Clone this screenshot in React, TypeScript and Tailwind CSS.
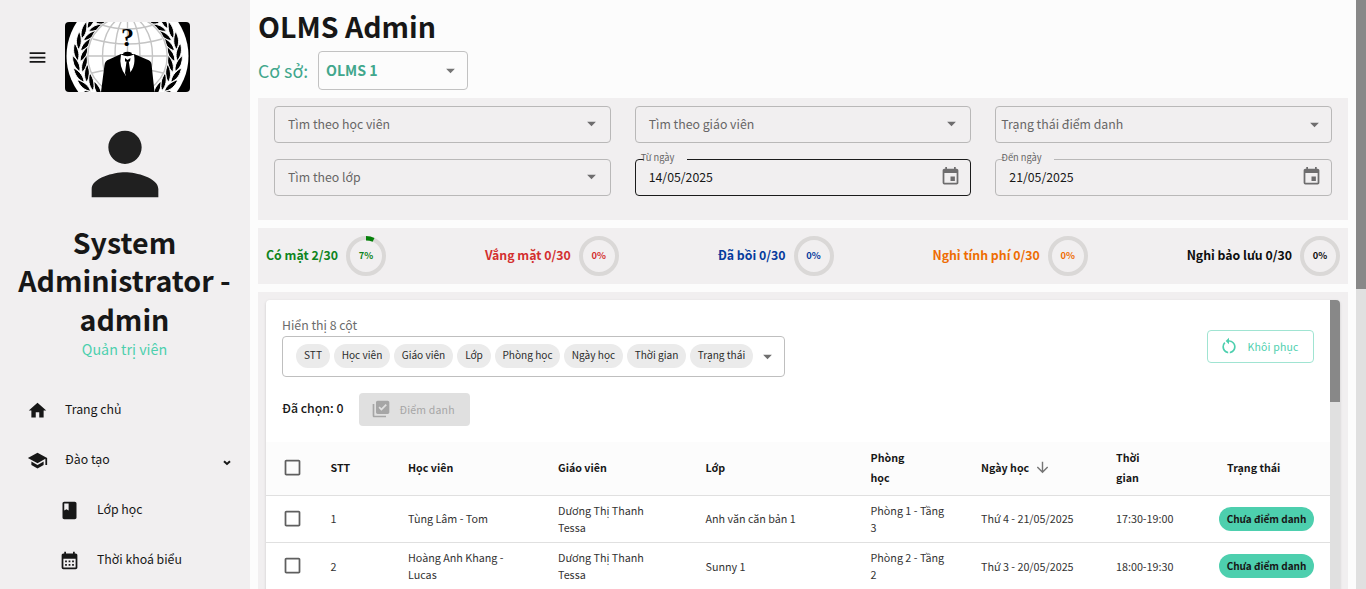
import React from "react";
import {
  MdMenu,
  MdPerson,
  MdHome,
  MdSchool,
  MdBook,
  MdCalendarMonth,
  MdEvent,
  MdArrowDropDown,
  MdArrowDownward,
  MdCheckBoxOutlineBlank,
  MdLibraryAddCheck,
  MdRestartAlt,
} from "react-icons/md";

const LEAF = "M0 1C3.6 -3.5 3.6 -10 1 -17C-2.6 -11 -3 -4.500 0 1Z";

function Wreath() {
  const steps = [50, 37, 24, 11, -2, -15, -28, -41, -54];
  return (
    <g>
      {steps.map((deg) => {
        const a = (deg * Math.PI) / 180;
        const x = 62.5 - 48.5 * Math.cos(a);
        const y = 36 - 48.5 * Math.sin(a);
        return (
          <g key={deg} transform={`translate(${x.toFixed(1)} ${y.toFixed(1)}) rotate(${deg})`}>
            <path d={LEAF} transform="translate(-1.500 0) rotate(-11)" />
            <path d={LEAF} transform="translate(1.500 1) rotate(28)" />
          </g>
        );
      })}
    </g>
  );
}

function Logo() {
  return (
    <svg viewBox="0 0 125 70" className="h-[70px] w-[125px] rounded">
      <rect width="125" height="70" fill="#000" />
      <circle cx="62.5" cy="34" r="61" fill="#fff" />
      <g fill="#000" stroke="#fff" strokeWidth="0.9">
        <Wreath />
        <g transform="translate(125 0) scale(-1 1)">
          <Wreath />
        </g>
      </g>
      <circle cx="62.5" cy="34" r="41" fill="#fff" />
      <g fill="none" stroke="#c4c4c4" strokeWidth="1.4">
        <circle cx="62.5" cy="34" r="39.7" />
        <ellipse cx="62.5" cy="34" rx="25" ry="39.7" />
        <ellipse cx="62.5" cy="34" rx="12.5" ry="39.7" />
        <path d="M22.8 34H102.2M62.5 -5V34M28 17Q62.5 27 97 17M37 3Q62.5 11 88 3M27 51Q62.5 42 98 51" />
      </g>
      <path d="M36 70L39.5 43Q40 38.500 44 37.500L56 32L69 32L82 37.500Q86 38.500 86.500 42L89.500 70Z" fill="#000" />
      <path d="M56 32.500Q53.500 45 61 54Q71.500 47 69 32.500Q62.500 36 56 32.500Z" fill="#fff" />
      <path d="M60 36L62.500 38L65.500 36L65 39.500L63.800 39.500L65.500 51L62 57L60 51L61.500 39.500L60 39.500Z" fill="#000" />
      <path d="M58 31Q62.500 28.500 67 31L66 32.800Q62.500 31.500 59 32.800Z" fill="#000" />
      <text
        x="62.500"
        y="23.500"
        textAnchor="middle"
        fontSize="26"
        fontWeight="bold"
        fontFamily="Liberation Serif, serif"
      >
        ?
      </text>
    </svg>
  );
}

function NavItem({ icon, label, sub, open }: { icon: React.ReactNode; label: string; sub?: boolean; open?: boolean }) {
  return (
    <li className={`flex h-[50px] items-center ${sub ? "pl-[58.500px]" : "pl-[26.500px]"} pr-[19.500px]`}>
      <span className="w-[38.500px] text-[21px]">{icon}</span>
      <span className="relative -top-px text-[12.3px] leading-5">{label}</span>
      {open && (
        <svg viewBox="0 0 8 6" className="mt-[5px] ml-auto h-[6px] w-2">
          <path d="M1 1.200L4 4L7 1.200" fill="none" stroke="#171717" strokeWidth="2" />
        </svg>
      )}
    </li>
  );
}

function SelectField({ label, tight }: { label: string; tight?: boolean }) {
  return (
    <div
      className={`flex h-[37px] items-center justify-between rounded border border-[#b9b8b8] ${tight ? "pr-[6px] pl-[5px]" : "pr-[8px] pl-[13px]"}`}
    >
      <span className="relative -top-px text-[12.3px] leading-5 text-[#676666]">{label}</span>
      <MdArrowDropDown className={`text-[21px] text-[#6e6d6e] ${tight ? "" : "-mt-[3px]"}`} />
    </div>
  );
}

function DateField({ label, value, active, notch }: { label: string; value: string; active?: boolean; notch: string }) {
  return (
    <div
      className={`relative flex h-[37px] items-center justify-between rounded border pr-[9px] pl-[13px] ${active ? "border-[#1b1b1b]" : "border-[#b9b8b8]"}`}
    >
      <span className={`absolute -top-px h-px bg-[#f1eff0] ${notch}`} />
      <span className="absolute -top-[10px] left-[5px] text-[9.3px] leading-[14px] text-[#676666]">{label}</span>
      <span className="relative -top-px text-[12.3px] leading-5">{value}</span>
      <MdEvent className="-mt-[2px] text-[21px] text-[#6e6d6e]" />
    </div>
  );
}

const stats = [
  { label: "Có mặt 2/30", pct: 7, color: "text-[#0e8420]" },
  { label: "Vắng mặt 0/30", pct: 0, color: "text-[#d32f2f]" },
  { label: "Đã bồi 0/30", pct: 0, color: "text-[#063b9d]" },
  { label: "Nghỉ tính phí 0/30", pct: 0, color: "text-[#ee6c02]" },
  { label: "Nghỉ bảo lưu 0/30", pct: 0, color: "text-[#0d0d0d]" },
];

function Ring({ pct }: { pct: number }) {
  return (
    <div className="relative flex size-10 items-center justify-center">
      <svg viewBox="0 0 40 40" className="absolute inset-0">
        <circle cx="20" cy="20" r="18" fill="none" stroke="#dad8d7" strokeWidth="4" />
        {pct > 0 && (
          <circle
            cx="20"
            cy="20"
            r="17.8"
            fill="none"
            stroke="#058009"
            strokeWidth="4.4"
            pathLength="100"
            strokeDasharray={`${pct} 100`}
            transform="rotate(-90 20 20)"
          />
        )}
      </svg>
      <span className="relative -top-px text-[9.3px] leading-4 font-bold">{pct}%</span>
    </div>
  );
}

const chips = [
  { label: "STT", w: "w-[34px]" },
  { label: "Học viên", w: "w-[56px]" },
  { label: "Giáo viên", w: "w-[59px]" },
  { label: "Lớp", w: "w-[34px]" },
  { label: "Phòng học", w: "w-[65px]" },
  { label: "Ngày học", w: "w-[59px]" },
  { label: "Thời gian", w: "w-[59px]" },
  { label: "Trạng thái", w: "w-[63px]" },
];

const rows = [
  { n: 1, student: "Tùng Lâm - Tom", cls: "Anh văn căn bản 1", room: "Phòng 1 - Tầng 3", day: "Thứ 4 - 21/05/2025", time: "17:30-19:00", nudge: "-top-px" },
  { n: 2, student: "Hoàng Anh Khang - Lucas", cls: "Sunny 1", room: "Phòng 2 - Tầng 2", day: "Thứ 3 - 20/05/2025", time: "18:00-19:30", nudge: "top-0" },
];

const GRID = "grid grid-cols-[64.500px_77.500px_150px_147.500px_165px_110.500px_135px_103px_95px] items-center";

export default function App() {
  return (
    <div className="flex h-[589px] w-full overflow-hidden bg-[#fcfcfc] font-['Noto_Sans_CJK_SC',sans-serif] text-[#171717]">
      <aside className="flex w-[250px] shrink-0 flex-col bg-[#f1eff0]">
        <div className="flex items-center pt-[22px] pl-[26.500px]">
          <MdMenu className="mr-[17.500px] text-[21px]" />
          <Logo />
        </div>
        <MdPerson className="mt-[22px] self-center text-[100px] text-[#202020]" />
        <h2 className="mt-[9px] pr-[9px] pl-2 text-center text-[28.6px] leading-[38.4px] font-bold">
          System Administrator - admin
        </h2>
        <p className="pr-px text-center text-[14.3px] leading-[22px] text-[#4dcfae]">Quản trị viên</p>
        <ul className="mt-[25px]">
          <NavItem icon={<MdHome />} label="Trang chủ" />
          <NavItem icon={<MdSchool />} label="Đào tạo" open />
          <NavItem icon={<MdBook />} label="Lớp học" sub />
          <NavItem icon={<MdCalendarMonth />} label="Thời khoá biểu" sub />
        </ul>
      </aside>

      <main className="flex min-w-0 flex-1 flex-col px-2">
        <h1 className="mt-[6px] text-[28.5px] leading-10 font-bold">OLMS Admin</h1>
        <div className="mt-[5px] flex items-center">
          <span className="relative -top-px w-[60px] text-[17.8px] leading-7 text-[#41a78c]">Cơ sở:</span>
          <div className="flex h-[39px] w-[150px] items-center justify-between rounded border border-[#c2c2c2] pr-[6.500px] pl-[7px]">
            <span className="relative -top-px text-[14.2px] leading-5 font-bold text-[#41a78c]">OLMS 1</span>
            <MdArrowDropDown className="text-[21px] text-[#757575]" />
          </div>
        </div>

        <section className="mt-2 grid h-[122px] shrink-0 grid-cols-3 content-start gap-x-6 gap-y-4 bg-[#f1eff0] px-4 pt-2">
          <SelectField label="Tìm theo học viên" />
          <SelectField label="Tìm theo giáo viên" />
          <SelectField label="Trạng thái điểm danh" tight />
          <SelectField label="Tìm theo lớp" />
          <DateField label="Từ ngày" value="14/05/2025" active notch="left-[8px] w-[43px]" />
          <DateField label="Đến ngày" value="21/05/2025" notch="left-[6px] w-[52px]" />
        </section>

        <section className="mt-2 flex h-14 shrink-0 items-center justify-between bg-[#f1eff0] px-2">
          {stats.map((s) => (
            <div key={s.label} className={`flex items-center gap-2 ${s.color}`}>
              <span className="relative -top-px text-[12.3px] leading-5 font-bold">{s.label}</span>
              <Ring pct={s.pct} />
            </div>
          ))}
        </section>

        <section className="mt-2 flex flex-1 bg-[#f1eff0] px-2 pt-2">
          <div className="flex flex-1 overflow-hidden rounded-t bg-white shadow-[0_1px_3px_rgba(0,0,0,0.16)]">
            <div className="w-[1064px]">
              <div className="flex h-[142px] justify-between px-4">
                <div className="pt-[15px]">
                  <p className="text-[12.3px] leading-[21px] text-[#6b6b6b]">Hiển thị 8 cột</p>
                  <div className="flex h-[41px] w-[503px] items-start gap-1 rounded border border-[#bfbfbf] pt-[7px] pl-[13px]">
                    {chips.map((c) => (
                      <span
                        key={c.label}
                        className={`flex h-6 items-center justify-center rounded-full bg-[#ebebeb] pb-[2px] text-[10.1px] whitespace-nowrap text-[#2b2b2b] ${c.w}`}
                      >
                        {c.label}
                      </span>
                    ))}
                    <MdArrowDropDown className="mt-[2px] text-[21px] text-[#6f6f6f]" />
                  </div>
                  <div className="mt-4 flex h-[33px] items-center">
                    <span className="relative -top-[2px] w-[77px] text-[12.3px] leading-5 font-medium">Đã chọn: 0</span>
                    <button className="flex h-[33px] w-[111px] items-center rounded bg-[#e0e0e0] pl-[12px] text-[#a6a6a6]">
                      <MdLibraryAddCheck className="mr-[8.500px] mb-[2px] text-[20px]" />
                      <span className="text-[10.5px] leading-5 tracking-[0.2px]">Điểm danh</span>
                    </button>
                  </div>
                </div>
                <button className="mt-[30px] flex h-[33px] w-[107px] items-center rounded border border-[#a0e4d2] pl-[11px] text-[#4dcfae]">
                  <MdRestartAlt className="mr-[8.500px] mb-[2px] text-[20px]" />
                  <span className="text-[10.5px] leading-5 tracking-[0.2px]">Khôi phục</span>
                </button>
              </div>

              <div className={`h-[54px] border-b border-[#e0e0e0] bg-[#fcfcfc] pb-[2px] text-[10.7px] leading-5 font-bold ${GRID}`}>
                <MdCheckBoxOutlineBlank className="ml-[15.500px] text-[21px] text-[#5f5f5f]" />
                <span>STT</span>
                <span>Học viên</span>
                <span>Giáo viên</span>
                <span>Lớp</span>
                <span className="w-[50px]">Phòng học</span>
                <span className="flex items-center gap-[5px]">
                  Ngày học
                  <MdArrowDownward className="text-[17px] text-[#757575]" />
                </span>
                <span className="w-[40px]">Thời gian</span>
                <span className="pl-2">Trạng thái</span>
              </div>
              {rows.map((r) => (
                <div key={r.n} className={`h-[47px] border-b border-[#e0e0e0] text-[10.75px] leading-[17px] text-[#333] ${GRID}`}>
                  <MdCheckBoxOutlineBlank className="-mt-px ml-[15.500px] text-[21px] text-[#5f5f5f]" />
                  <span className={`relative ${r.nudge}`}>{r.n}</span>
                  <span className={`relative w-[110px] ${r.nudge}`}>{r.student}</span>
                  <span className="w-[100px]">Dương Thị Thanh Tessa</span>
                  <span className={`relative ${r.nudge}`}>{r.cls}</span>
                  <span className="w-[79px]">{r.room}</span>
                  <span className={`relative ${r.nudge}`}>{r.day}</span>
                  <span className={`relative ${r.nudge}`}>{r.time}</span>
                  <span className="flex h-6 w-[95px] items-center justify-center rounded-full bg-[#4dcfae] pb-[2px] text-[10px] font-bold whitespace-nowrap text-[#171717]">
                    Chưa điểm danh
                  </span>
                </div>
              ))}
            </div>
            <div className="w-[10px] bg-[#e0e0e0]">
              <div className="h-[102px] bg-[#888]" />
            </div>
          </div>
        </section>
      </main>

      <div className="w-[10px] shrink-0 bg-[#e0e0e0]">
        <div className="h-[289px] bg-[#888]" />
      </div>
    </div>
  );
}
